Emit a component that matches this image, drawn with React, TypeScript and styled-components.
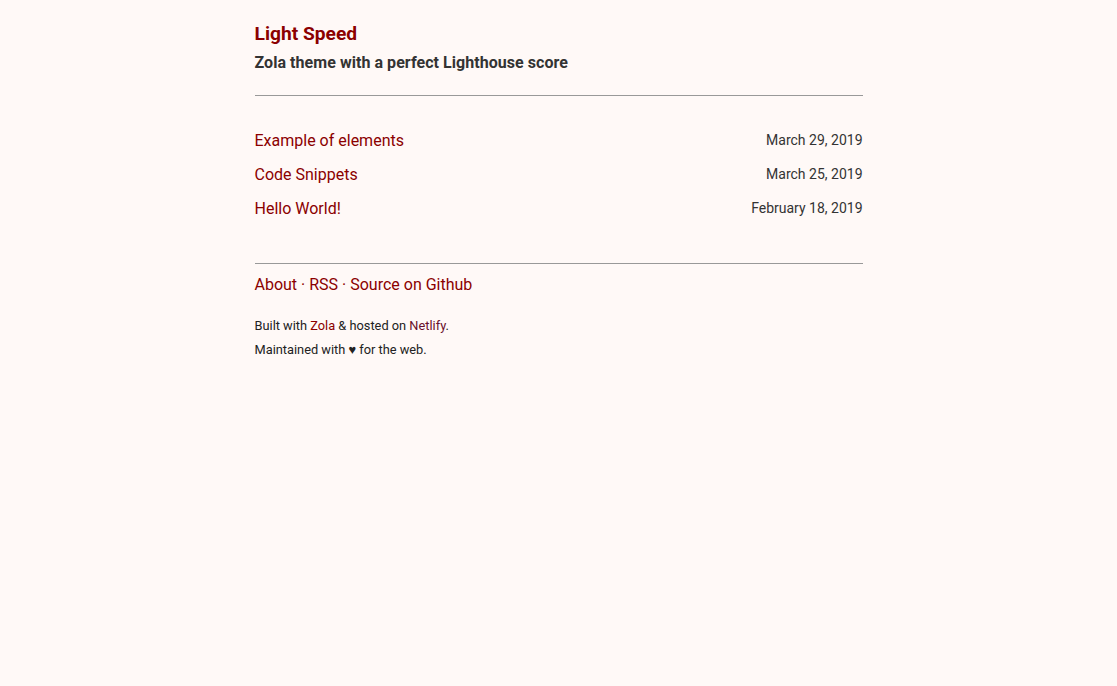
import React from "react";
import styled, { createGlobalStyle } from "styled-components";

const Global = createGlobalStyle`
  html, body { margin: 0; padding: 0; }
  body {
    background: #fff9f7;
    font-family: Roboto, "Liberation Sans", sans-serif;
    color: #222;
  }
`;

const Page = styled.div`
  max-width: 608px;
  margin: 0 auto;
  padding: 20px 0;
`;

const Header = styled.header`
  display: flex;
  flex-direction: column;
`;

const Title = styled.a`
  color: #8b0000;
  font-weight: 700;
  font-size: 19.2px;
  line-height: 28px;
  text-decoration: none;
  align-self: flex-start;
`;

const Subtitle = styled.div`
  font-weight: 700;
  font-size: 16px;
  line-height: 24px;
  color: #333;
  margin-top: 3px;
  letter-spacing: 0.05px;
`;

const Rule = styled.hr<{ $top: number; $bottom: number }>`
  border: 0;
  border-top: 1px solid #999;
  margin: ${(p) => p.$top}px 0 ${(p) => p.$bottom}px;
`;

const PostList = styled.ul`
  list-style: none;
  margin: 0;
  padding: 0;
  display: flex;
  flex-direction: column;
  gap: 8px;
`;

const PostRow = styled.li`
  display: flex;
  justify-content: space-between;
  align-items: center;
  height: 26px;
`;

const PostLink = styled.a`
  color: #8b0000;
  font-size: 16px;
  text-decoration: none;
`;

const PostDate = styled.span`
  font-size: 14px;
  color: #333;
`;

const FooterNav = styled.nav`
  font-size: 16px;
  line-height: 24px;
  color: #8b0000;
`;

const FooterLink = styled.a`
  color: #8b0000;
  text-decoration: none;
`;

const Small = styled.p`
  font-size: 12.8px;
  line-height: 24px;
  margin: 0;
  color: #222;
`;

const SmallLink = styled.a<{ $visited?: boolean }>`
  color: ${(p) => (p.$visited ? "#6a0f2c" : "#8b0000")};
  text-decoration: none;
`;

const SmallBlock = styled.div`
  margin-top: 17px;
`;

const posts = [
  { title: "Example of elements", date: "March 29, 2019" },
  { title: "Code Snippets", date: "March 25, 2019" },
  { title: "Hello World!", date: "February 18, 2019" },
];

export default function App() {
  return (
    <>
      <Global />
      <Page>
        <Header>
          <Title href="#">Light Speed</Title>
          <Subtitle>Zola theme with a perfect Lighthouse score</Subtitle>
        </Header>
        <Rule $top={20} $bottom={31} />
        <PostList>
          {posts.map((p) => (
            <PostRow key={p.title}>
              <PostLink href="#">{p.title}</PostLink>
              <PostDate>{p.date}</PostDate>
            </PostRow>
          ))}
        </PostList>
        <Rule $top={42} $bottom={9} />
        <FooterNav>
          <FooterLink href="#">About</FooterLink> · <FooterLink href="#">RSS</FooterLink> ·{" "}
          <FooterLink href="#">Source on Github</FooterLink>
        </FooterNav>
        <SmallBlock>
          <Small>
            Built with <SmallLink href="#">Zola</SmallLink> &amp; hosted on{" "}
            <SmallLink href="#" $visited>
              Netlify
            </SmallLink>
            .
          </Small>
          <Small>Maintained with ♥ for the web.</Small>
        </SmallBlock>
      </Page>
    </>
  );
}
